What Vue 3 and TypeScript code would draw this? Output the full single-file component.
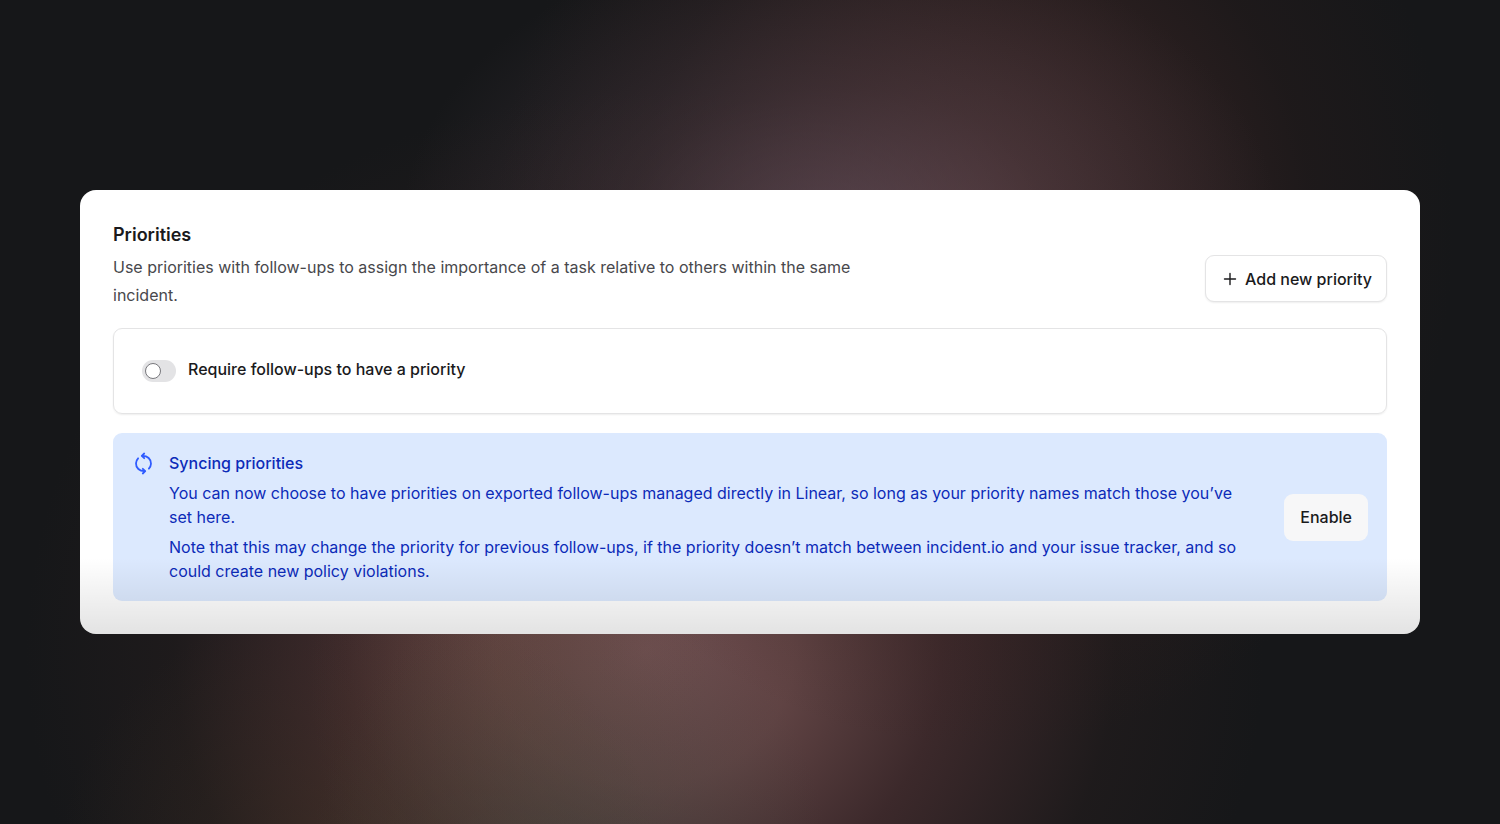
<script setup lang="ts">
import { ref } from 'vue'

const required = ref(false)
const notes: string[] = [
  'You can now choose to have priorities on exported follow-ups managed directly in Linear, so long as your priority names match those you’ve set here.',
  'Note that this may change the priority for previous follow-ups, if the priority doesn’t match between incident.io and your issue tracker, and so could create new policy violations.',
]
</script>

<template>
  <main class="stage">
    <section class="card" aria-labelledby="priorities-title">
      <header class="head">
        <div class="intro">
          <h1 id="priorities-title">Priorities</h1>
          <p>Use priorities with follow-ups to assign the importance of a task relative to others within the same incident.</p>
        </div>
        <button type="button" class="btn add">
          <svg viewBox="0 0 14 14" width="14" height="14" aria-hidden="true">
            <path d="M7 1.5v11M1.5 7h11" fill="none" stroke="currentColor" stroke-width="1.4" stroke-linecap="round" />
          </svg>
          Add new priority
        </button>
      </header>

      <div class="setting">
        <input id="require-priority" v-model="required" type="checkbox" role="switch" class="toggle" />
        <label for="require-priority">Require follow-ups to have a priority</label>
      </div>

      <aside class="callout">
        <svg class="sync" viewBox="0 0 24 24" width="24" height="24" aria-hidden="true">
          <g fill="none" stroke="currentColor" stroke-width="1.8" stroke-linecap="round" stroke-linejoin="round">
            <path d="M11.4 4.8c5-.2 8.800 3.400 8.600 8-.1 2-.9 3.600-2.100 4.900" />
            <path d="M13.200 2.500 10.800 4.800l2.400 2.400" />
            <path d="M13.600 20.200c-5 .2-8.800-3.400-8.600-8 .1-2 .9-3.600 2.100-4.900" />
            <path d="M11.800 22.500 14.200 20.200l-2.400-2.400" />
          </g>
        </svg>
        <div class="copy">
          <h2>Syncing priorities</h2>
          <p v-for="note in notes" :key="note">{{ note }}</p>
        </div>
        <button type="button" class="btn enable">Enable</button>
      </aside>
    </section>
  </main>
</template>

<style>
body {
  margin: 0;
  background: #161719;
}
</style>

<style scoped>
.stage {
  box-sizing: border-box;
  min-height: 100vh;
  padding: 40px 80px;
  display: flex;
  align-items: center;
  font-family: Inter, "Liberation Sans", sans-serif;
  font-size: 16px;
  color: #1a1a1c;
  background:
    radial-gradient(ellipse 260px 300px at 38% 106%, rgba(64, 72, 64, 0.5), rgba(64, 72, 64, 0.24) 50%, transparent),
    radial-gradient(ellipse 300px 260px at 24% 104%, rgba(74, 54, 38, 0.45), rgba(74, 54, 38, 0.2) 50%, transparent),
    radial-gradient(ellipse 200px 320px at 34% 82%, rgba(104, 68, 56, 0.34), rgba(104, 68, 56, 0.17) 50%, transparent),
    radial-gradient(ellipse 440px 300px at 56% 28%, rgba(104, 84, 98, 0.62), rgba(96, 76, 88, 0.3) 48%, transparent),
    radial-gradient(ellipse 480px 520px at 65% 28%, rgba(92, 56, 54, 0.66), rgba(80, 46, 44, 0.44) 38%, rgba(60, 34, 32, 0.2) 70%, transparent),
    radial-gradient(ellipse 620px 560px at 43% 79%, rgba(120, 84, 86, 0.92), rgba(114, 78, 78, 0.8) 24%, rgba(92, 56, 58, 0.54) 48%, rgba(62, 40, 38, 0.2) 76%, transparent),
    #161719;
}

.card {
  box-sizing: border-box;
  width: 100%;
  padding: 33px;
  border-radius: 16px;
  background: #fff;
  position: relative;
  overflow: hidden;
}

.card::after {
  content: "";
  position: absolute;
  inset: auto 0 0;
  height: 76px;
  background: linear-gradient(transparent, rgba(0, 0, 0, 0.11));
  pointer-events: none;
}

.head {
  display: flex;
  justify-content: space-between;
  align-items: center;
  gap: 40px;
}

.intro {
  max-width: 768px;
}

h1,
h2,
p {
  margin: 0;
}

h1 {
  font-size: 18px;
  line-height: 24px;
  font-weight: 600;
}

.intro p {
  margin-top: 6px;
  line-height: 28px;
  color: #48484c;
}

.btn {
  flex: none;
  height: 47px;
  padding: 0 15px;
  border: 1px solid transparent;
  border-radius: 9px;
  font: inherit;
  font-weight: 500;
  color: inherit;
  cursor: pointer;
}

.add {
  display: flex;
  align-items: center;
  gap: 8px;
  margin-top: 25px;
  padding: 0 14px 0 17px;
  border-color: #e4e4e5;
  background: #fff;
  box-shadow: 0 1px 2px rgba(0, 0, 0, 0.07);
}

.setting {
  display: flex;
  align-items: center;
  gap: 12px;
  box-sizing: border-box;
  margin-top: 19px;
  padding: 28px;
  border: 1px solid #e4e4e5;
  border-radius: 9px;
  box-shadow: 0 1px 2px rgba(0, 0, 0, 0.07);
}

.setting label {
  line-height: 24px;
  padding-bottom: 4px;
  font-weight: 500;
}

.toggle {
  appearance: none;
  flex: none;
  display: flex;
  align-items: center;
  box-sizing: border-box;
  width: 34px;
  height: 22px;
  margin: 0;
  padding: 3px;
  border-radius: 11px;
  background: #e3e3e5;
  cursor: pointer;
}

.toggle::before {
  content: "";
  box-sizing: border-box;
  width: 16px;
  height: 16px;
  border: 1px solid #77777c;
  border-radius: 50%;
  background: #fff;
}

.toggle:checked {
  justify-content: flex-end;
  background: #2b5bfb;
}

.callout {
  display: flex;
  align-items: center;
  margin-top: 19px;
  padding: 18px 19px 18px 18px;
  border-radius: 9px;
  background: #dce9fe;
  color: #0c2bb8;
}

.sync {
  flex: none;
  align-self: flex-start;
  margin-right: 14px;
  color: #2f5bff;
}

.copy {
  flex: 1;
  line-height: 24px;
}

h2 {
  font-size: 16px;
  line-height: 24px;
  font-weight: 500;
}

.copy p {
  margin-top: 6px;
}

.enable {
  margin-left: 32px;
  background: #f7f7f8;
  color: #1a1a1c;
}
</style>
